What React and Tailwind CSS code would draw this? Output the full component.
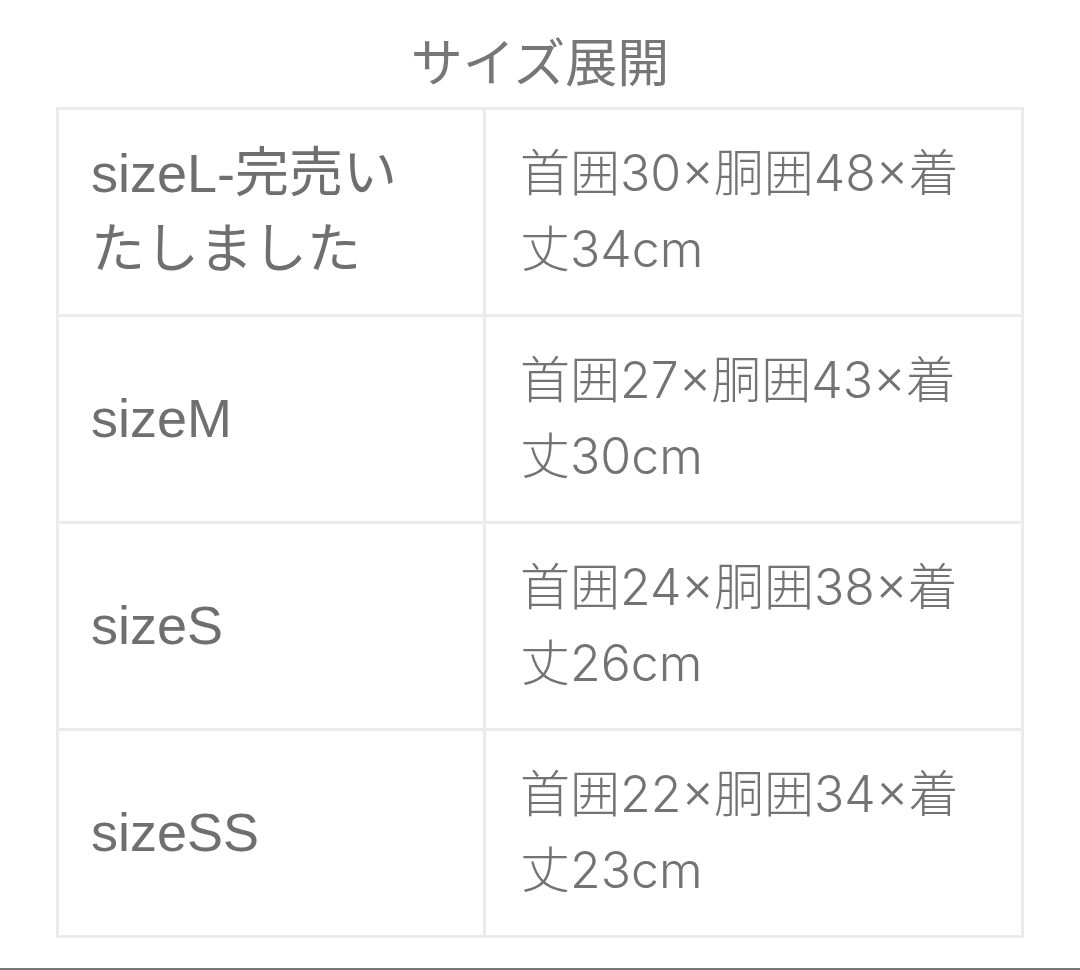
export default function App() {
  const rows = [
    ["sizeL-完売いたしました", "首囲30×胴囲48×着丈34cm"],
    ["sizeM", "首囲27×胴囲43×着丈30cm"],
    ["sizeS", "首囲24×胴囲38×着丈26cm"],
    ["sizeSS", "首囲22×胴囲34×着丈23cm"],
  ];
  const left = { fontFamily: '"Liberation Sans", "Noto Sans CJK JP", sans-serif' };
  const right = { fontFamily: 'Inter, "Noto Sans CJK JP", sans-serif' };
  return (
    <div className="w-[1080px] h-[970px] bg-white flex flex-col" style={left}>
      <div className="h-[107px] flex justify-center pt-[38px]">
        <div className="text-[52px] leading-none text-[#777777]">サイズ展開</div>
      </div>
      <div className="mx-[56px] border-x-[3px] border-t-[3px] border-[#ebebeb] flex flex-col">
        {rows.map(([a, b], i) => (
          <div key={i} className="flex h-[207px] border-b-[3px] border-[#ebebeb]">
            <div className="w-[427px] border-r-[3px] border-[#ebebeb] flex items-center pl-[32px] pr-[50px] pb-[3px] text-[54px] leading-[76px] text-[#6f6f6f]" style={left}>
              <div>{a}</div>
            </div>
            <div className="flex-1 flex items-center pl-[34px] pr-[34px] pb-[3px] text-[50px] leading-[76px] text-[#737373] font-light" style={right}>
              <div>{b}</div>
            </div>
          </div>
        ))}
      </div>
      <div className="flex-1" />
      <div className="h-[2px] bg-[#777777]" />
    </div>
  );
}
